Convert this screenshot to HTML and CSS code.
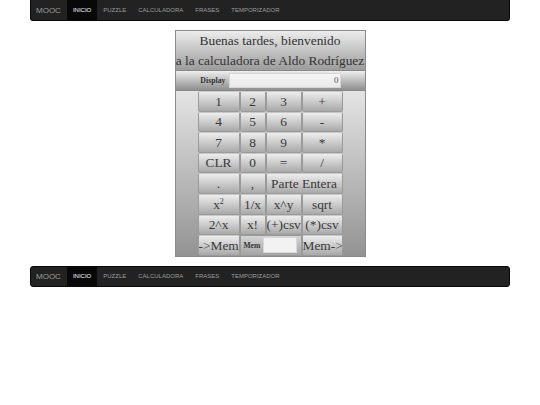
FILE: index.html
```html
<!DOCTYPE html>
<html lang="es">
<head>
<meta charset="utf-8">
<title>Calculadora</title>
<link rel="stylesheet" href="styles.css">
</head>
<body>
<nav class="navbar navbar-top">
  <span class="brand">MOOC</span>
  <a class="nav-link active">INICIO</a>
  <a class="nav-link">PUZZLE</a>
  <a class="nav-link">CALCULADORA</a>
  <a class="nav-link">FRASES</a>
  <a class="nav-link">TEMPORIZADOR</a>
</nav>

<div class="calc">
  <div class="calc-title">
    <div>Buenas tardes, bienvenido</div>
    <div>a la calculadora de Aldo Rodríguez</div>
  </div>
  <div class="calc-display">
    <span class="display-label">Display</span>
    <span class="display-field">0</span>
  </div>
  <div class="calc-body">
    <div class="keypad">
      <button class="key">1</button>
      <button class="key">2</button>
      <button class="key">3</button>
      <button class="key">+</button>
      <button class="key">4</button>
      <button class="key">5</button>
      <button class="key">6</button>
      <button class="key">-</button>
      <button class="key">7</button>
      <button class="key">8</button>
      <button class="key">9</button>
      <button class="key">*</button>
      <button class="key">CLR</button>
      <button class="key">0</button>
      <button class="key">=</button>
      <button class="key">/</button>
      <button class="key">.</button>
      <button class="key">,</button>
      <button class="key span2">Parte Entera</button>
      <button class="key">x<sup>2</sup></button>
      <button class="key">1/x</button>
      <button class="key">x^y</button>
      <button class="key">sqrt</button>
      <button class="key">2^x</button>
      <button class="key">x!</button>
      <button class="key">(+)csv</button>
      <button class="key">(*)csv</button>
      <button class="key">-&gt;Mem</button>
      <div class="mem span2"><span class="mem-label">Mem</span><span class="mem-field"></span></div>
      <button class="key">Mem-&gt;</button>
    </div>
  </div>
</div>

<nav class="navbar navbar-bottom">
  <span class="brand">MOOC</span>
  <a class="nav-link active">INICIO</a>
  <a class="nav-link">PUZZLE</a>
  <a class="nav-link">CALCULADORA</a>
  <a class="nav-link">FRASES</a>
  <a class="nav-link">TEMPORIZADOR</a>
</nav>
</body>
</html>
```

FILE: styles.css
```css
html, body {
  margin: 0;
  padding: 0;
  background: #fff;
}

body {
  font-family: "Liberation Serif", "Times New Roman", serif;
}

/* Navigation bar */
.navbar {
  width: 480px;
  height: 21px;
  margin: 0 auto;
  box-sizing: border-box;
  display: flex;
  align-items: stretch;
  background: #222;
  border: 1px solid #080808;
  font-family: "Liberation Sans", Arial, sans-serif;
}

.navbar-top {
  border-top: none;
  border-radius: 0 0 3px 3px;
}

.navbar-bottom {
  margin-top: 9px;
  border-radius: 3px;
}

.brand {
  display: flex;
  align-items: center;
  padding: 0 6px 0 5px;
  font-size: 8px;
  color: #9d9d9d;
}

.nav-link {
  display: flex;
  align-items: center;
  padding: 0 6px;
  font-size: 6px;
  color: #9d9d9d;
}

.nav-link.active {
  background: #080808;
  color: #fff;
}

/* Calculator */
.calc {
  width: 191px;
  margin: 9px auto 0;
  box-sizing: border-box;
  border: 1px solid #8a8a8a;
  color: #333;
}

.calc-title {
  height: 40px;
  box-sizing: border-box;
  border-bottom: 1px solid #8a8a8a;
  background: linear-gradient(#ececec, #9c9c9c);
  text-align: center;
  font-size: 13.4px;
  line-height: 19.5px;
  white-space: nowrap;
}

.calc-display {
  height: 20px;
  box-sizing: border-box;
  display: flex;
  align-items: center;
  background: linear-gradient(#eeeeee, #8e8e8e);
  border-bottom: 1px solid #8a8a8a;
}

.display-label {
  width: 53px;
  text-align: right;
  padding-right: 3px;
  box-sizing: border-box;
  font-size: 7.8px;
  font-weight: bold;
}

.display-field {
  width: 112px;
  height: 15px;
  box-sizing: border-box;
  background: linear-gradient(#f6f6f6, #e9e9e9);
  border: 1px solid #d6d6d6;
  text-align: right;
  font-size: 9px;
  line-height: 13px;
  padding-right: 1px;
  color: #555;
}

.calc-body {
  padding: 0 22px;
  background: linear-gradient(#e4e4e4, #939393);
}

.keypad {
  display: grid;
  grid-template-columns: 42px 26px 36px 41px;
  grid-auto-rows: 20.6px;
}

.key {
  margin: 0;
  padding: 0;
  box-sizing: border-box;
  border: 1px solid #9a9a9a;
  border-top-color: #c8c8c8;
  border-radius: 2px;
  background: linear-gradient(#ededed, #a9a9a9);
  font-family: "Liberation Serif", "Times New Roman", serif;
  font-size: 13.4px;
  line-height: 1;
  color: #3a3a3a;
  white-space: nowrap;
  overflow: hidden;
}

.key sup {
  font-size: 8px;
  line-height: 0;
}

.span2 {
  grid-column: span 2;
}

.mem {
  display: flex;
  align-items: center;
  gap: 3px;
  padding: 0 4px 0 3px;
  box-sizing: border-box;
  border: 1px solid #9a9a9a;
  background: linear-gradient(#d4d4d4, #a4a4a4);
}

.mem-label {
  font-size: 7.5px;
  font-weight: bold;
}

.mem-field {
  flex: 1;
  height: 14px;
  background: #f2f2f2;
  border: 1px solid #d8d8d8;
}
```
